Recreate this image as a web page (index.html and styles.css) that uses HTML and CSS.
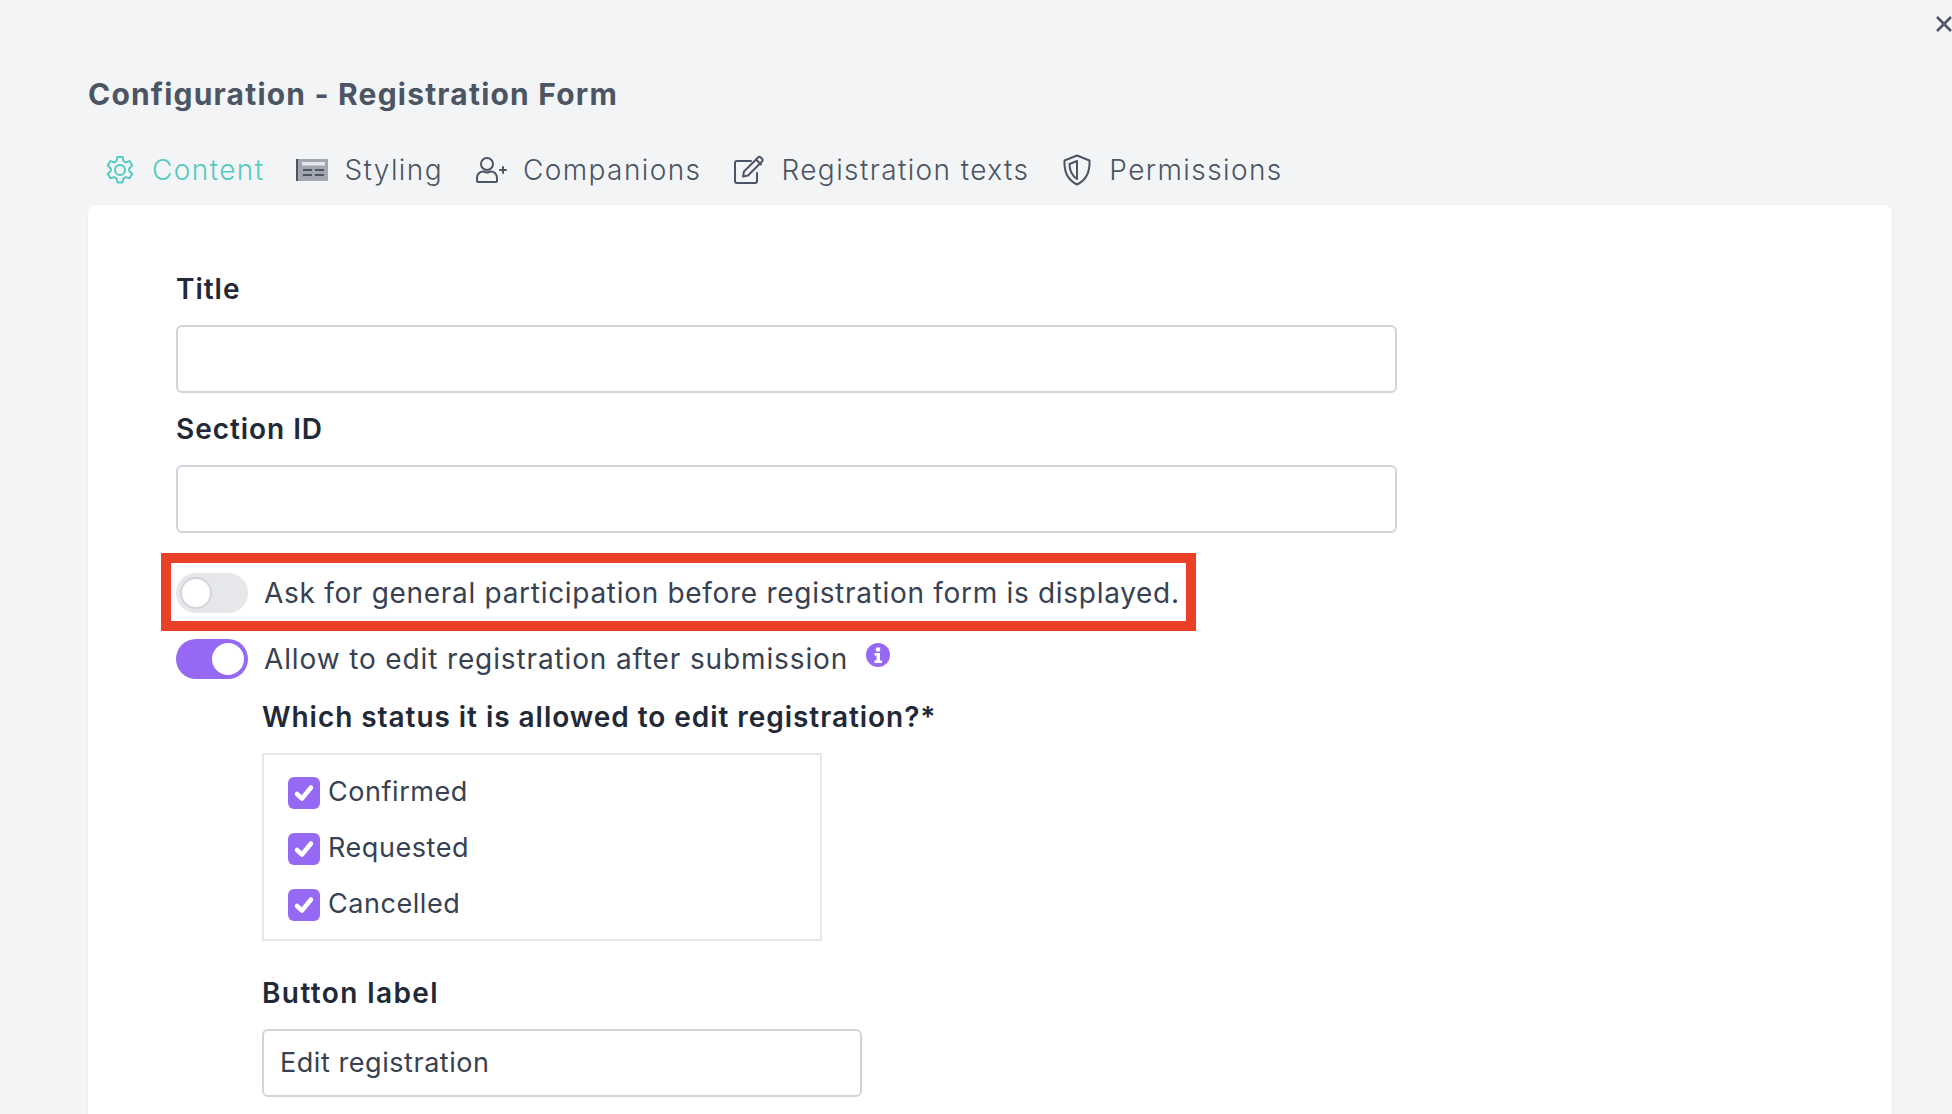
FILE: index.html
```html
<!DOCTYPE html>
<html lang="en">
<head>
<meta charset="utf-8">
<title>Configuration - Registration Form</title>
<link rel="stylesheet" href="styles.css">
</head>
<body>
<svg class="close" viewBox="0 0 16 16" aria-hidden="true"><path d="M1 1l14 14M15 1L1 15"/></svg>
<main class="modal">
  <h1 class="heading">Configuration - Registration Form</h1>
  <nav class="tabs">
    <a class="tab tab-active">
      <svg class="tab-icon" viewBox="0 0 32 32"><path d="M13.4 3h5.2l.9 4 2.2 1.3 3.9-1.2 2.6 4.5-3 2.8v2.600l3 2.800-2.600 4.500-3.900-1.200-2.200 1.300-.9 4h-5.200l-.9-4-2.200-1.300-3.900 1.200-2.600-4.500 3-2.800v-2.600l-3-2.800 2.600-4.500 3.900 1.200 2.200-1.300z"/><circle cx="16" cy="16" r="5"/></svg>
      Content
    </a>
    <a class="tab">
      <svg class="tab-icon" viewBox="0 0 32 32"><rect x="0" y="5" width="3" height="22" fill="#4b5563"/><rect x="2" y="5" width="30" height="22" rx="1" fill="#a3a6af"/><rect x="6" y="8" width="23" height="3.500" fill="#e5e7eb"/><path class="dash" d="M7 16h9M19 16h9M7 21h9M19 21h9"/></svg>
      Styling
    </a>
    <a class="tab">
      <svg class="tab-icon" viewBox="0 0 32 32"><circle cx="12" cy="10" r="6"/><path d="M2 27v-3c0-4 3-6.500 6-6.500 1.500 0 2.500 1 4 1s2.500-1 4-1c3 0 6 2.500 6 6.500v3a1 1 0 0 1-1 1H3a1 1 0 0 1-1-1zM25 16h6M28 13v6"/></svg>
      Companions
    </a>
    <a class="tab">
      <svg class="tab-icon" viewBox="0 0 32 32"><path d="M24 19v8a2 2 0 0 1-2 2H4a2 2 0 0 1-2-2V9a2 2 0 0 1 2-2h14M11 17.500L25 3.500a2 2 0 0 1 2.800 0l1.200 1.200a2 2 0 0 1 0 2.800L15 21.500l-5 1zM23 5.500l5 5"/></svg>
      Registration texts
    </a>
    <a class="tab">
      <svg class="tab-icon" viewBox="0 0 32 32"><path d="M16 1.500l12.500 5c.5 10-2 19-12.500 24-10.500-5-13-14-12.500-24z"/><path d="M16 7l-7.500 3c0 6 1.500 11 7.500 15z"/></svg>
      Permissions
    </a>
  </nav>
  <section class="card">
    <div class="field">
      <label class="label">Title</label>
      <div class="input"></div>
    </div>
    <div class="field">
      <label class="label">Section ID</label>
      <div class="input"></div>
    </div>
    <div class="switch-row first">
      <span class="switch"><span class="knob"></span></span>
      <span class="switch-text">Ask for general participation before registration form is displayed.</span>
      <span class="highlight"></span>
    </div>
    <div class="switch-row">
      <span class="switch switch-on"><span class="knob"></span></span>
      <span class="switch-text switch-text-wide">Allow to edit registration after submission</span>
      <svg class="info" viewBox="0 0 24 24"><circle cx="12" cy="12" r="12" fill="#9669f5"/><circle cx="12" cy="6.500" r="2.300" fill="#fff"/><path d="M8.500 10h5.500v7.500h2V20H8.500v-2.500h2V12.500h-2z" fill="#fff"/></svg>
    </div>
    <div class="nested">
      <h2 class="label status-title">Which status it is allowed to edit registration?*</h2>
      <div class="check-box">
        <div class="check-row"><svg class="check" viewBox="0 0 32 32"><rect width="32" height="32" rx="6" fill="#9669f5"/><path d="M9 17l5 4.500 9-11" /></svg><span class="check-text">Confirmed</span></div>
        <div class="check-row"><svg class="check" viewBox="0 0 32 32"><rect width="32" height="32" rx="6" fill="#9669f5"/><path d="M9 17l5 4.500 9-11" /></svg><span class="check-text">Requested</span></div>
        <div class="check-row"><svg class="check" viewBox="0 0 32 32"><rect width="32" height="32" rx="6" fill="#9669f5"/><path d="M9 17l5 4.500 9-11" /></svg><span class="check-text">Cancelled</span></div>
      </div>
      <label class="label button-label">Button label</label>
      <div class="input input-short">Edit registration</div>
    </div>
  </section>
</main>
</body>
</html>
```
FILE: styles.css
```css
* { box-sizing: border-box; }
body {
  margin: 0;
  height: 1114px;
  overflow: hidden;
  position: relative;
  background: #f3f4f6;
  color: #374151;
  font-family: Inter, "Open Sans", "Liberation Sans", sans-serif;
}
.close {
  position: absolute;
  top: 16px;
  left: 1936px;
  width: 16px;
  height: 16px;
  fill: none;
  stroke: #4b5563;
  stroke-width: 2.500;
}
.modal {
  display: flex;
  flex-direction: column;
  height: 1114px;
  padding: 75px 60px 0 88px;
}
.heading {
  margin: 0;
  height: 38px;
  font-size: 30px;
  line-height: 38px;
  font-weight: 700;
  letter-spacing: 1.200px;
  color: #4b5563;
  white-space: nowrap;
}
.tabs {
  display: flex;
  gap: 32px;
  height: 92px;
  padding: 37px 0 0 16px;
}
.tab {
  display: flex;
  align-items: center;
  gap: 16px;
  height: 40px;
  font-size: 28px;
  letter-spacing: 1.400px;
  font-weight: 300;
  color: #4b5563;
  white-space: nowrap;
}
.tab-active { color: #56c9c1; }
.tab-icon {
  width: 32px;
  height: 32px;
  flex: none;
  fill: none;
  stroke: currentColor;
  stroke-width: 2;
  stroke-linejoin: round;
  stroke-linecap: round;
}
.tab-icon rect { stroke: none; }
.tab-icon .dash { stroke: #4b5563; stroke-linecap: butt; }
.card {
  flex: 1;
  background: #fff;
  border-radius: 8px 8px 0 0;
  box-shadow: 0 1px 3px rgba(0, 0, 0, .06);
  padding: 64px 88px 0;
  overflow: hidden;
}
.field {
  display: flex;
  flex-direction: column;
  gap: 16px;
  margin-bottom: 16px;
  width: 1221px;
}
.label {
  display: block;
  margin: 0;
  height: 40px;
  font-size: 28px;
  letter-spacing: .95px;
  line-height: 40px;
  font-weight: 600;
  color: #1f2937;
}
.input {
  height: 68px;
  border: 2px solid #d1d5db;
  border-radius: 6px;
  background: #fff;
}
.switch-row {
  position: relative;
  display: flex;
  align-items: center;
  height: 40px;
  margin-bottom: 26px;
}
.switch-row.first { margin-top: 40px; }
.switch {
  display: flex;
  align-items: center;
  flex: none;
  width: 72px;
  height: 40px;
  padding: 4px;
  border-radius: 20px;
  background: #e5e7eb;
}
.knob {
  width: 32px;
  height: 32px;
  border-radius: 50%;
  background: #fff;
  border: 2px solid #d1d5db;
}
.switch-on { background: #9669f5; justify-content: flex-end; }
.switch-on .knob { border: 0; }
.switch-text {
  margin-left: 16px;
  font-size: 28px;
  letter-spacing: .7px;
  font-weight: 400;
  color: #374151;
  white-space: nowrap;
}
.switch-text-wide { letter-spacing: .87px; }
.highlight {
  position: absolute;
  left: -15px;
  top: -20px;
  width: 1035px;
  height: 78px;
  border: 10px solid #ea4025;
  pointer-events: none;
}
.info { width: 24px; height: 24px; margin: -8px 0 0 18px; flex: none; }
.nested { margin-left: 86px; margin-top: -8px; }
.status-title { white-space: nowrap; }
.check-box {
  width: 560px;
  height: 188px;
  margin-top: 16px;
  padding: 18px 24px 0;
  border: 2px solid #e5e7eb;
  display: flex;
  flex-direction: column;
  gap: 16px;
}
.check-row {
  display: flex;
  align-items: center;
  gap: 8px;
  height: 40px;
  font-size: 27px;
  letter-spacing: .55px;
  font-weight: 400;
  color: #374151;
}
.check-text { margin-bottom: 4px; }
.check {
  width: 32px;
  height: 32px;
  flex: none;
  fill: none;
  stroke: #fff;
  stroke-width: 4.500;
  stroke-linecap: round;
  stroke-linejoin: round;
}
.check rect { stroke: none; }
.button-label { margin-top: 32px; letter-spacing: 1.400px; }
.input-short {
  width: 600px;
  margin-top: 16px;
  padding: 0 16px;
  font-size: 27px;
  letter-spacing: .55px;
  line-height: 64px;
  color: #374151;
}
```
